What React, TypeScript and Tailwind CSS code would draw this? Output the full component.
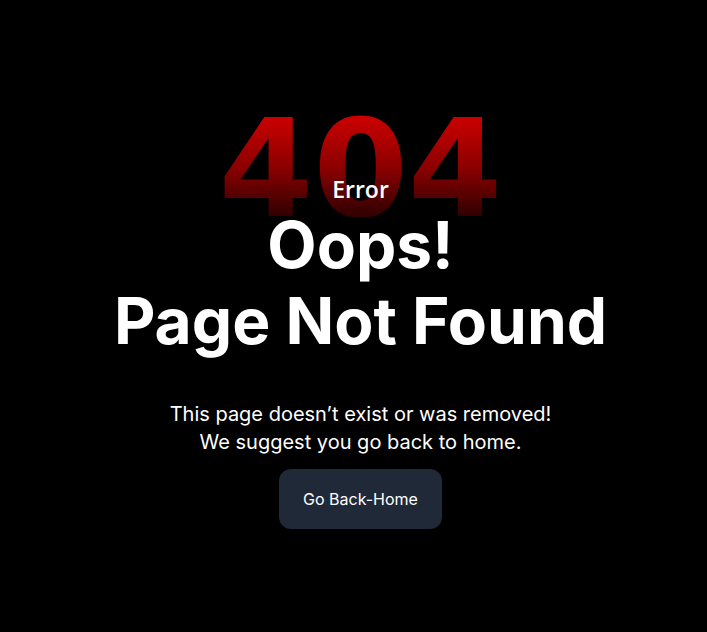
import React from "react";

function App() {
  return (
    <div className="flex min-h-screen w-full flex-col items-center bg-black pt-[101px] pl-[14px]">
      <div className="flex flex-col items-center text-center">
        <span className="bg-gradient-to-b from-[#e00000] via-[#8a0000] to-[#100000] bg-clip-text font-['DejaVu_Sans',sans-serif] text-[136px] font-bold leading-none text-transparent">
          404
        </span>
        <span className="-mt-[59px] font-['Open_Sans',sans-serif] text-[23px] font-semibold leading-none text-white">
          Error
        </span>
        <h1 className="mt-[6px] font-['Inter',sans-serif] text-[64px] font-bold leading-[76px] text-white">
          Oops!
          <br />
          Page Not Found
        </h1>
        <p className="mt-[41px] font-['Inter',sans-serif] text-xl leading-7 text-white">
          This page doesn’t exist or was removed!
          <br />
          We suggest you go back to home.
        </p>
        <button className="mt-[13px] rounded-xl bg-[#1f2937] px-6 py-[18px] font-['Inter',sans-serif] text-base leading-6 text-white">
          Go Back-Home
        </button>
      </div>
    </div>
  );
}

export default App;
